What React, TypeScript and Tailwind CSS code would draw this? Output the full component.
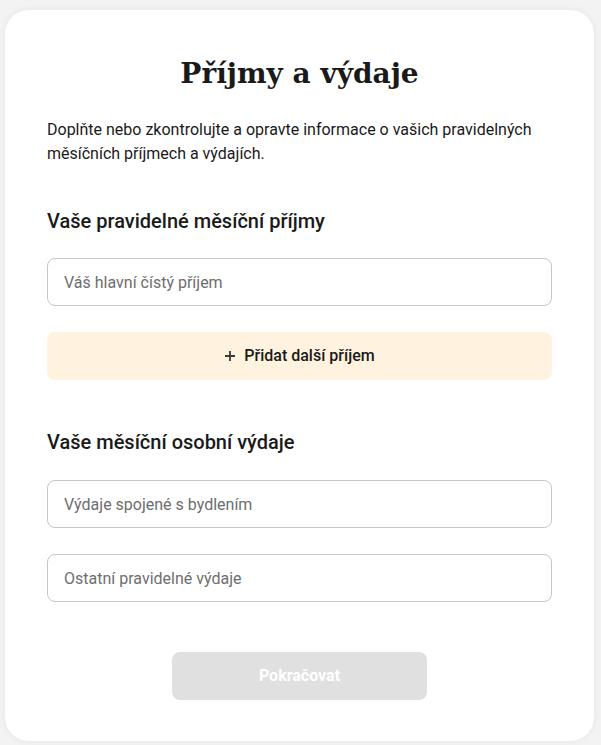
import React from 'react';

const Field: React.FC<{ placeholder: string }> = ({ placeholder }) => (
  <input
    type="text"
    placeholder={placeholder}
    className="block h-12 w-full rounded-lg border border-[#c6c6c6] bg-white px-4 text-base text-[#1a1a1a] placeholder:text-[#6e6e6e] outline-none"
  />
);

export default function App() {
  return (
    <div className="min-h-[745px] bg-[#f3f3f3] pl-[5px] pt-[10px] font-['Roboto',sans-serif]">
      <div className="w-[589px] h-[731px] rounded-[24px] bg-white px-[42px] pt-[40px] shadow-[0_0_8px_rgba(0,0,0,0.06)]">
        <h1 className="text-center font-['DejaVu_Serif',serif] text-[28px] font-bold leading-[48px] text-[#1a1a1a]">
          Příjmy a výdaje
        </h1>
        <p className="mt-[20px] text-base leading-6 text-[#1a1a1a]">
          Doplňte nebo zkontrolujte a opravte informace o vašich pravidelných měsíčních příjmech a výdajích.
        </p>

        <h2 className="mt-[41px] text-[20px] font-medium leading-7 text-[#1a1a1a]">Vaše pravidelné měsíční příjmy</h2>
        <div className="mt-[23px]">
          <Field placeholder="Váš hlavní čístý příjem" />
        </div>
        <button className="mt-[26px] flex h-12 w-full items-center justify-center gap-2 rounded-lg bg-[#fff2de] text-base font-medium text-[#1a1a1a]">
          <svg width="12" height="12" viewBox="0 0 12 12" className="text-[#3a3a3a]">
            <path d="M6 1v10M1 6h10" stroke="currentColor" strokeWidth="1.8" />
          </svg>
          Přidat další příjem
        </button>

        <h2 className="mt-[48px] text-[20px] font-medium leading-7 text-[#1a1a1a]">Vaše měsíční osobní výdaje</h2>
        <div className="mt-[24px] flex flex-col gap-[26px]">
          <Field placeholder="Výdaje spojené s bydlením" />
          <Field placeholder="Ostatní pravidelné výdaje" />
        </div>

        <div className="mt-[50px] flex justify-center">
          <button disabled className="h-12 w-[255px] rounded-lg bg-[#e0e0e0] text-base font-bold text-white">
            Pokračovat
          </button>
        </div>
      </div>
    </div>
  );
}
